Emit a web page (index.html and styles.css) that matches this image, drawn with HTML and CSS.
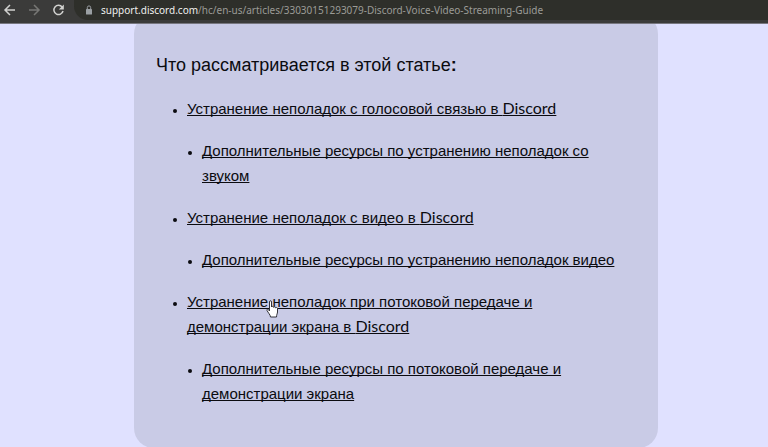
FILE: index.html
```
<!DOCTYPE html>
<html lang="ru">
  <head>
    <meta charset="utf-8">
    <title>Discord Voice Video Streaming Guide</title>
    <link rel="stylesheet" href="styles.css">
  </head>
  <body>
    <header class="toolbar">
      <button class="nav-button" aria-label="Назад">
        <svg width="16" height="16" viewBox="0 0 16 16"><path d="M8 4 3 9l5 5M3.500 9H13"/></svg>
      </button>
      <button class="nav-button" aria-label="Вперёд" disabled>
        <svg width="16" height="16" viewBox="0 0 16 16"><path d="M8 4l5 5-5 5M3 9h9.500"/></svg>
      </button>
      <button class="nav-button" aria-label="Обновить">
        <svg width="16" height="16" viewBox="0 0 16 16"><path d="M12.200 6.200A4.600 4.600 0 1 0 13 10"/><path class="solid" d="M13.800 3.500v5h-5z"/></svg>
      </button>
      <div class="address-bar">
        <svg class="lock" width="8" height="10" viewBox="0 0 8 10"><rect x="1" y="4" width="6" height="5.500" rx="0.600"/><path d="M2.300 4.500V2.600a1.700 1.700 0 0 1 3.400 0v1.900"/></svg>
        <span class="url"><span class="host">support.discord.com</span>/hc/en-us/articles/33030151293079-Discord-Voice-Video-Streaming-Guide</span>
      </div>
    </header>

    <main class="page">
      <section class="card">
        <h2>Что рассматривается в этой статье<b>:</b></h2>
        <ul class="toc">
          <li>
            <a href="#voice">Устранение неполадок с голосовой связью в <span class="latin">Discord</span></a>
            <ul>
              <li><a href="#voice-more">Дополнительные ресурсы по устранению неполадок со звуком</a></li>
            </ul>
          </li>
          <li>
            <a href="#video">Устранение неполадок с видео в <span class="latin">Discord</span></a>
            <ul>
              <li><a href="#video-more">Дополнительные ресурсы по устранению неполадок видео</a></li>
            </ul>
          </li>
          <li class="hovered">
            <a href="#stream">Устранение неполадок при потоковой передаче и демонстрации экрана в <span class="latin">Discord</span></a>
            <svg class="pointer" width="13" height="18" viewBox="0 0 13 18"><path d="M3.500 11V2c0-1.800 2-1.800 2 0v5c.3-1 2-.9 2 .3.500-.9 2-.6 2 .5.600-.7 2-.3 2 .8V12c0 1.500-1 2.500-1 5H4.500C4.500 15 2 12.500 1 10.500c-.5-1.200.8-1.700 1.500-.8z"/></svg>
            <ul>
              <li><a href="#stream-more">Дополнительные ресурсы по потоковой передаче и демонстрации экрана</a></li>
            </ul>
          </li>
        </ul>
      </section>
    </main>
  </body>
</html>
```
FILE: styles.css
```
* {
  box-sizing: border-box;
}
body {
  margin: 0;
  background-color: #e0e1ff;
  color: #0b0b10;
  font-family: "Liberation Sans", Arial, sans-serif;
}
.toolbar {
  display: flex;
  align-items: flex-start;
  height: 24px;
  padding-left: 2px;
  background-color: #3b3b3a;
  border-bottom: 1px solid #77777f;
}
.nav-button {
  width: 16px;
  height: 18px;
  margin-right: 8px;
  padding: 0;
  border: none;
  background: none;
}
.nav-button svg {
  display: block;
  fill: none;
  stroke: #d2d2d0;
  stroke-width: 1.5;
}
.nav-button:disabled svg {
  stroke: #777775;
}
.nav-button .solid {
  fill: #d2d2d0;
  stroke: none;
}
.address-bar {
  flex: 1;
  display: flex;
  align-items: center;
  height: 20px;
  padding-left: 11px;
  background-color: #2e2f2a;
  border-radius: 0 0 0 14px;
}
.lock {
  margin-right: 8px;
  fill: #9a9fa3;
}
.lock path {
  fill: none;
  stroke: #9a9fa3;
}
.url {
  color: #9b9b97;
  font-family: "Noto Sans", sans-serif;
  font-size: 10px;
  line-height: 18px;
  white-space: nowrap;
}
.host {
  color: #f0f0ee;
}
.page {
  overflow: hidden;
  padding: 0 110px 0 134px;
}
.card {
  margin-top: -10px;
  padding: 37px 22px 42px;
  background-color: #c9cbe6;
  border-radius: 20px;
}
h2 {
  margin: 0;
  font-size: 18px;
  font-weight: normal;
  line-height: 28px;
}
ul {
  margin: 0;
  padding: 0;
}
.toc {
  padding-left: 31px;
}
.toc ul {
  padding-left: 15px;
  list-style: disc;
}
li {
  margin-top: 17px;
  font-size: 15px;
  line-height: 25px;
}
li::marker {
  font-size: 12px;
}
a {
  color: inherit;
  text-underline-offset: 1px;
  text-decoration-skip-ink: none;
}
.latin {
  font-family: Lato, sans-serif;
  font-size: 16px;
  line-height: 1;
}
.hovered {
  position: relative;
}
/* hand cursor over the hovered link */
.pointer {
  position: absolute;
  top: 11px;
  left: 79px;
  fill: #fff;
  stroke: #33333a;
}
```
